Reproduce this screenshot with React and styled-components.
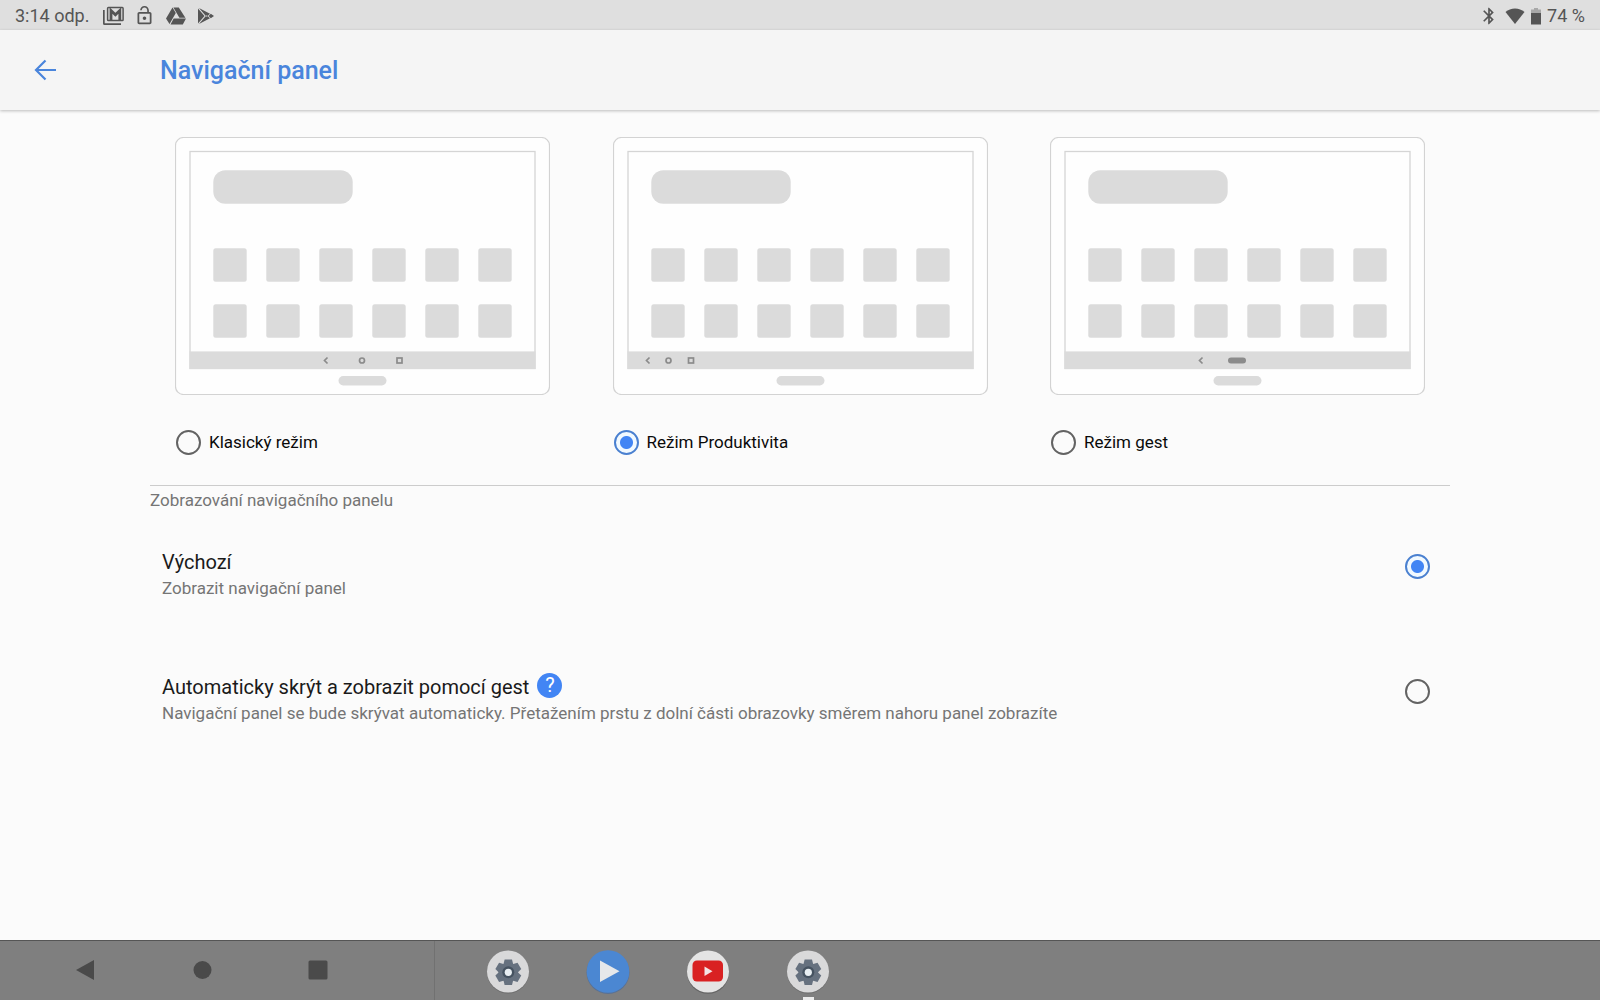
import React, { useState } from 'react';
import styled, { createGlobalStyle } from 'styled-components';

const GlobalStyle = createGlobalStyle`
  * {
    box-sizing: border-box;
  }

  body {
    margin: 0;
    background: #fbfbfb;
    color: #1a1a1a;
    font-family: Roboto, 'Noto Sans', sans-serif;
  }
`;

const Screen = styled.div`
  display: flex;
  flex-direction: column;
  min-height: 100vh;
`;

const StatusBar = styled.div`
  display: flex;
  align-items: center;
  justify-content: space-between;
  height: 30px;
  padding: 1px 15px 0;
  background: #dfdfdf;
  color: #555;
  font-size: 18px;
  line-height: 24px;
`;

const StatusGroup = styled.div`
  display: flex;
  align-items: center;
  gap: ${p => p.$gap}px;
`;

const StatusIcon = styled.svg`
  display: block;
  fill: #555;
`;

const Clock = styled.span`
  margin-right: 4px;
`;

const Header = styled.header`
  display: flex;
  align-items: center;
  height: 80px;
  padding: 2px 32px 0;
  background: #f5f5f5;
  box-shadow: 0 1px 3px rgba(0, 0, 0, 0.25);
`;

const BackButton = styled.button`
  display: flex;
  width: 128px;
  padding: 0;
  border: 0;
  background: none;
  cursor: pointer;
`;

const Title = styled.h1`
  margin: 0;
  color: #4a85dc;
  font-size: 25px;
  font-weight: 500;
  line-height: 32px;
`;

const Content = styled.main`
  flex: 1;
  padding: 27px 150px 0;
`;

const Modes = styled.div`
  display: flex;
  justify-content: space-between;
  padding: 0 25px 30px;
  border-bottom: 1px solid #ccc;
`;

const Mode = styled.label`
  width: 30%;
  cursor: pointer;
`;

const ModeChoice = styled.span`
  display: flex;
  align-items: center;
  gap: 8px;
  margin-top: 34px;
  padding-left: 1px;
  color: #0a0a0a;
  font-size: 17px;
  line-height: 26px;
`;

const Radio = styled.input.attrs({ type: 'radio' })`
  appearance: none;
  flex: none;
  width: 25px;
  height: 25px;
  margin: 0;
  border: 2px solid #636363;
  border-radius: 50%;
  cursor: pointer;

  &:checked {
    border-color: #4a80d0;
    background: radial-gradient(circle, #4285f4 6px, #f1f9ff 7px);
  }
`;

const OptionRadio = styled(Radio)`
  margin-top: 6px;
`;

const SectionTitle = styled.h2`
  margin: 0;
  color: #757575;
  font-size: 17px;
  font-weight: 400;
  line-height: 28px;
`;

const Option = styled.div`
  display: flex;
  align-items: flex-start;
  justify-content: space-between;
  margin-top: ${p => p.$space}px;
  padding: 0 20px 0 12px;
`;

const OptionTitle = styled.div`
  display: flex;
  align-items: flex-start;
  gap: 8px;
  font-size: 20px;
  line-height: 28px;
`;

const OptionText = styled.div`
  color: #757575;
  font-size: 17px;
  line-height: 24px;
`;

const HelpButton = styled.button`
  width: 25px;
  height: 25px;
  padding: 0;
  border: 0;
  border-radius: 50%;
  background: #4285f4;
  color: #fff;
  font-family: inherit;
  font-size: 20px;
  line-height: 25px;
  cursor: pointer;
`;

const NavBar = styled.nav`
  display: flex;
  height: 60px;
  border-top: 1px solid #555;
  background: #7f7f7f;
`;

const NavKeys = styled.div`
  display: flex;
  align-items: center;
  gap: 67px;
  width: 435px;
  padding: 0 0 1px 61px;
  border-right: 1px solid #717171;
`;

const NavKey = styled.button`
  display: flex;
  justify-content: center;
  width: 49px;
  padding: 0;
  border: 0;
  background: none;
  cursor: pointer;
`;

const Dock = styled.div`
  display: flex;
  gap: 56px;
  padding: 9px 0 0 51px;
`;

const DockButton = styled.button`
  display: flex;
  flex-direction: column;
  align-items: center;
  width: 44px;
  height: 50px;
  padding: 0;
  border: 0;
  background: none;
  cursor: pointer;
`;

const RunningMark = styled.span`
  width: 11px;
  height: 3px;
  margin-top: 3px;
  background: #ececec;
`;

const keyMarks = {
  classic: (
    <g fill="none" stroke="#8b8b8b" strokeWidth="1.7">
      <path d="M152.5 220.5l-3 3 3 3" />
      <circle cx="187" cy="223.5" r="2.5" />
      <rect x="222" y="221" width="5" height="5" />
    </g>
  ),
  productivity: (
    <g fill="none" stroke="#8b8b8b" strokeWidth="1.7">
      <path d="M36.5 220.5l-3 3 3 3" />
      <circle cx="55.5" cy="223.5" r="2.5" />
      <rect x="75.5" y="221" width="5" height="5" />
    </g>
  ),
  gesture: (
    <g>
      <path d="M152.5 220.5l-3 3 3 3" fill="none" stroke="#8b8b8b" strokeWidth="1.7" />
      <rect x="178" y="220.5" width="18" height="6" rx="3" fill="#8b8b8b" />
    </g>
  ),
};

const Illustration = styled.svg`
  display: block;
  width: 100%;
`;

const Tablet = ({ mode }) => (
  <Illustration viewBox="0 0 375 258" aria-hidden="true">
    <rect x="0.5" y="0.5" width="374" height="257" rx="8" fill="#fefefe" stroke="#d3d3d3" strokeWidth="1.2" />
    <rect x="15" y="14.5" width="345" height="217" fill="none" stroke="#d5d5d5" strokeWidth="1.3" />
    <rect x="38.3" y="33.3" width="139.4" height="33.4" rx="12" fill="#dbdbdb" />
    {[111.3, 167.3].map(y =>
      [0, 1, 2, 3, 4, 5].map(i => (
        <rect key={`${y}-${i}`} x={38.3 + i * 53} y={y} width="33.4" height="33.4" rx="2.5" fill="#dbdbdb" />
      ))
    )}
    <rect x="14.5" y="214.4" width="346" height="17.6" fill="#dbdbdb" />
    <rect x="163.5" y="239" width="48" height="9.5" rx="4.7" fill="#dbdbdb" />
    {keyMarks[mode]}
  </Illustration>
);

const SettingsIcon = () => (
  <svg width="44" height="44" viewBox="0 0 44 44">
    <circle cx="22" cy="22.5" r="21" fill="#6d6d6d" />
    <circle cx="22" cy="21.5" r="21" fill="#d9d9da" />
    <g transform="translate(22.3 22.3)" fill="#66717f">
      {[0, 60, 120, 180, 240, 300].map(a => (
        <path key={a} transform={`rotate(${a})`} d="M-5-7.5l1.3-5.3h7.400L5-7.500z" />
      ))}
      <circle r="9.6" />
      <circle r="6" fill="#465361" />
      <circle r="3.6" fill="#e8eef2" />
    </g>
  </svg>
);

const VideoIcon = () => (
  <svg width="44" height="44" viewBox="0 0 44 44">
    <circle cx="22" cy="22.5" r="21.5" fill="#587196" />
    <circle cx="22" cy="21.5" r="21.3" fill="#4b87d2" />
    <path d="M14 10.5v21.5l19.500-10.800z" fill="#e6e8ea" />
  </svg>
);

const YoutubeIcon = () => (
  <svg width="44" height="44" viewBox="0 0 44 44">
    <circle cx="22" cy="22.8" r="21" fill="#646464" />
    <circle cx="22" cy="21.5" r="21" fill="#e4e4e4" />
    <rect x="6.5" y="10.5" width="30.5" height="21" rx="4.5" fill="#d92122" />
    <path d="M18.5 16.500v9.500l8-4.700z" fill="#f3e4e4" />
  </svg>
);

const modes = [
  { id: 'classic', label: 'Klasický režim' },
  { id: 'productivity', label: 'Režim Produktivita' },
  { id: 'gesture', label: 'Režim gest' },
];

const apps = [
  { name: 'Nastavení', Icon: SettingsIcon },
  { name: 'Video', Icon: VideoIcon },
  { name: 'YouTube', Icon: YoutubeIcon },
  { name: 'Navigační panel', Icon: SettingsIcon, running: true },
];

const Status = () => (
  <StatusBar>
    <StatusGroup $gap={10}>
      <Clock>3:14 odp.</Clock>
      <StatusIcon width="21" height="20" viewBox="0 0 21 20">
        <path d="M0 4h1.700v13.300H18V19H1.500A1.500 1.500 0 0 1 0 17.500z" />
        <g fill="none" stroke="#555">
          <rect x="4.600" y="1.600" width="15.500" height="13" rx="0.800" strokeWidth="1.500" />
          <path d="M8 14V4.500l4.400 4.200 4.400-4.200V14" strokeWidth="2.800" />
        </g>
      </StatusIcon>
      <StatusIcon width="21" height="21" viewBox="0 0 24 24">
        <path d="M12 17c1.100 0 2-.9 2-2s-.9-2-2-2-2 .9-2 2 .9 2 2 2zm6-9h-1V6c0-2.760-2.240-5-5-5S7 3.240 7 6h1.900c0-1.710 1.390-3.100 3.100-3.100 1.710 0 3.100 1.390 3.100 3.100v2H6c-1.100 0-2 .9-2 2v10c0 1.100.9 2 2 2h12c1.100 0 2-.9 2-2V10c0-1.100-.9-2-2-2zm0 12H6V10h12v10z" />
      </StatusIcon>
      <StatusIcon width="21" height="20" viewBox="-1 0 21 20">
        <path d="M6.500 1.500l3.300 5.600-6.300 11L0 12.400zM7.400 1.500h5.400l6.600 10.300h-6zM7.700 12.600H20l-3.200 6H4.500z" />
      </StatusIcon>
      <StatusIcon width="20" height="20" viewBox="1 0 20 20">
        <path d="M3 2.500v15l6.500-7.500zM4 2l11 5.700-3.500 3zM4 18l11-5.700-3.500-3zM15.800 7.800l3.200 2.200-3.200 2.200-2.200-2.200z" />
      </StatusIcon>
    </StatusGroup>
    <StatusGroup $gap={6}>
      <StatusIcon width="20" height="20" viewBox="0 0 24 24">
        <path d="M17.710 7.710L12 2h-1v7.590L6.410 5 5 6.410 10.590 12 5 17.590 6.410 19 11 14.410V22h1l5.710-5.710-4.300-4.290 4.300-4.290zM13 5.830l1.880 1.880L13 9.590V5.830zm1.880 10.460L13 18.170v-3.760l1.880 1.880z" />
      </StatusIcon>
      <StatusIcon width="20" height="18" viewBox="0 0 20 18">
        <path d="M10 17L.5 5Q4.500 1.500 10 1.500T19.500 5z" />
      </StatusIcon>
      <StatusIcon width="10" height="18" viewBox="4 0 10 18">
        <path d="M4 6V2.500h3V1h4v1.500h3V6z" opacity="0.4" />
        <path d="M4 6h10v11.500H4z" />
      </StatusIcon>
      <span>74 %</span>
    </StatusGroup>
  </StatusBar>
);

const App = () => {
  const [mode, setMode] = useState('productivity');
  const [display, setDisplay] = useState('default');

  return (
    <Screen>
      <GlobalStyle />
      <Status />
      <Header>
        <BackButton aria-label="Zpět">
          <svg width="26" height="26" viewBox="0 0 26 26" fill="none" stroke="#4a85dc" strokeWidth="2.2">
            <path d="M24 12H4M13.500 2.500L4 12l9.500 9.500" />
          </svg>
        </BackButton>
        <Title>Navigační panel</Title>
      </Header>
      <Content>
        <Modes>
          {modes.map(({ id, label }) => (
            <Mode key={id}>
              <Tablet mode={id} />
              <ModeChoice>
                <Radio name="mode" checked={mode === id} onChange={() => setMode(id)} />
                {label}
              </ModeChoice>
            </Mode>
          ))}
        </Modes>
        <SectionTitle>Zobrazování navigačního panelu</SectionTitle>
        <Option $space={34}>
          <label htmlFor="display-default">
            <OptionTitle>Výchozí</OptionTitle>
            <OptionText>Zobrazit navigační panel</OptionText>
          </label>
          <OptionRadio
            id="display-default"
            name="display"
            checked={display === 'default'}
            onChange={() => setDisplay('default')}
          />
        </Option>
        <Option $space={73}>
          <div>
            <OptionTitle>
              <label htmlFor="display-auto">Automaticky skrýt a zobrazit pomocí gest</label>
              <HelpButton aria-label="Nápověda">?</HelpButton>
            </OptionTitle>
            <OptionText>
              Navigační panel se bude skrývat automaticky. Přetažením prstu z dolní části obrazovky směrem nahoru panel zobrazíte
            </OptionText>
          </div>
          <OptionRadio
            id="display-auto"
            name="display"
            checked={display === 'auto'}
            onChange={() => setDisplay('auto')}
          />
        </Option>
      </Content>
      <NavBar>
        <NavKeys>
          <NavKey aria-label="Zpět">
            <svg width="20" height="20" viewBox="0 0 20 20" fill="#4a4a4a">
              <path d="M0 10L18 0v20z" />
            </svg>
          </NavKey>
          <NavKey aria-label="Domů">
            <svg width="20" height="20" viewBox="0 0 20 20" fill="#4a4a4a">
              <circle cx="10.5" cy="10" r="9" />
            </svg>
          </NavKey>
          <NavKey aria-label="Poslední aplikace">
            <svg width="20" height="20" viewBox="0 0 20 20" fill="#4a4a4a">
              <rect x="0.5" y="0.5" width="19" height="19" rx="1.5" />
            </svg>
          </NavKey>
        </NavKeys>
        <Dock>
          {apps.map(({ name, Icon, running }) => (
            <DockButton key={name} aria-label={name}>
              <Icon />
              {running && <RunningMark />}
            </DockButton>
          ))}
        </Dock>
      </NavBar>
    </Screen>
  );
};

export default App;
